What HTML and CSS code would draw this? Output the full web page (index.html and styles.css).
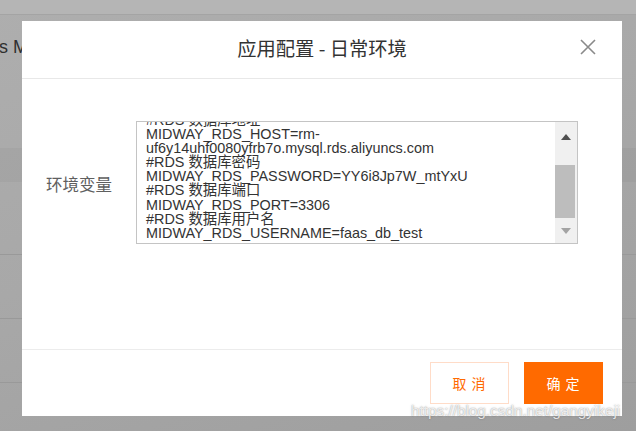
FILE: index.html
```html
<!DOCTYPE html>
<html lang="zh-CN">
<head>
<meta charset="utf-8">
<title>应用配置 - 日常环境</title>
<link rel="stylesheet" href="styles.css">
</head>
<body>
<div class="page">
  <div class="topbar"></div>
  <div class="head-row"><span class="bg-text">s M</span></div>
  <div class="band"></div>
  <div class="row r1"></div>
  <div class="row r2"></div>
  <div class="row r3"></div>
  <div class="row r4"></div>
</div>

<div class="modal">
  <div class="modal-header">
    <h2 class="modal-title">应用配置 - 日常环境</h2>
    <span class="close" aria-label="close">
      <svg width="16" height="16" viewBox="0 0 16 16"><path d="M1 1 L15 15 M15 1 L1 15" stroke="#8a8a8a" stroke-width="1.6" fill="none"/></svg>
    </span>
  </div>
  <div class="modal-body">
    <div class="form-row">
      <label class="form-label">环境变量</label>
      <div class="textarea">
        <div class="ta-content">
          <div class="ta-lines">
            <div>#RDS 数据库地址</div>
            <div>MIDWAY_RDS_HOST=rm-uf6y14uhf0080yfrb7o.mysql.rds.aliyuncs.com</div>
            <div>#RDS 数据库密码</div>
            <div>MIDWAY_RDS_PASSWORD=YY6i8Jp7W_mtYxU</div>
            <div>#RDS 数据库端口</div>
            <div>MIDWAY_RDS_PORT=3306</div>
            <div>#RDS 数据库用户名</div>
            <div>MIDWAY_RDS_USERNAME=faas_db_test</div>
          </div>
        </div>
        <div class="scrollbar">
          <div class="sb-btn sb-up"><span class="arrow-up"></span></div>
          <div class="sb-gap"></div>
          <div class="sb-thumb"></div>
          <div class="sb-fill"></div>
          <div class="sb-btn sb-down"><span class="arrow-down"></span></div>
        </div>
      </div>
    </div>
  </div>
  <div class="modal-footer">
    <button class="btn btn-cancel">取 消</button>
    <button class="btn btn-ok">确 定</button>
  </div>
</div>

<div class="watermark">https://blog.csdn.net/gangyikeji</div>
</body>
</html>
```

FILE: styles.css
```css
html, body {
  margin: 0;
  padding: 0;
}
body {
  width: 636px;
  height: 431px;
  overflow: hidden;
  position: relative;
  background: linear-gradient(160deg, #aeaeae 0%, #a8a8a8 45%, #9e9e9e 100%);
  font-family: "Liberation Sans", "Noto Sans CJK SC", sans-serif;
}
.page {
  display: flex;
  flex-direction: column;
}
.topbar {
  height: 14px;
  background: #b5b5b5;
  border-bottom: 1px solid #a4a4a4;
}
.head-row {
  height: 67px;
  display: flex;
  align-items: center;
}
.bg-text {
  font-size: 18px;
  color: #2f2f2f;
  margin-left: -1px;
  margin-top: -2px;
}
.band {
  height: 34px;
  margin-top: 66px;
  background: rgba(0, 0, 0, 0.03);
}
.row {
  border-bottom: 1px solid #999999;
}
.r1 { height: 72px; }
.r2 { height: 63px; }
.r3 { height: 63px; }
.r4 { height: 40px; border-bottom: none; }

.modal {
  position: absolute;
  left: 22px;
  top: 21px;
  width: 600px;
  height: 395px;
  background: #ffffff;
  display: flex;
  flex-direction: column;
}
.modal-header {
  height: 57px;
  border-bottom: 1px solid #e8e8e8;
  display: flex;
  align-items: center;
  justify-content: center;
  position: relative;
}
.modal-title {
  margin: 0;
  margin-top: -3px;
  font-size: 19.3px;
  font-weight: normal;
  color: #333333;
  font-family: "Noto Sans CJK SC", sans-serif;
}
.close {
  position: absolute;
  right: 26px;
  top: 18px;
  width: 16px;
  height: 16px;
  display: flex;
}
.modal-body {
  flex: 1;
  padding: 42px 44px 0 24px;
}
.form-row {
  display: flex;
  align-items: center;
}
.form-label {
  width: 90px;
  font-size: 16.5px;
  color: #5f5f5f;
  font-family: "Noto Sans CJK SC", sans-serif;
  margin-top: 2px;
}
.textarea {
  width: 442px;
  height: 123px;
  box-sizing: border-box;
  border: 1px solid #c4c4c4;
  display: flex;
  overflow: hidden;
}
.ta-content {
  flex: 1;
  overflow: hidden;
  padding-left: 9px;
}
.ta-lines {
  margin-top: -9px;
  font-size: 14.4px;
  line-height: 14.1px;
  color: #333333;
  font-family: "Liberation Sans", "Noto Sans CJK SC", sans-serif;
  overflow-wrap: break-word;
}
.scrollbar {
  width: 22px;
  background: #f0f0f0;
  display: flex;
  flex-direction: column;
}
.sb-btn {
  display: flex;
  align-items: center;
  justify-content: center;
}
.sb-up { height: 29px; }
.sb-gap { height: 14px; }
.sb-thumb {
  height: 53px;
  margin: 0 2px 0 0;
  background: #bdbdbd;
}
.sb-fill { flex: 1; }
.sb-down { height: 24px; }
.arrow-up {
  width: 0;
  height: 0;
  border-left: 5.5px solid transparent;
  border-right: 5.5px solid transparent;
  border-bottom: 6px solid #4f4f4f;
}
.arrow-down {
  width: 0;
  height: 0;
  border-left: 5.5px solid transparent;
  border-right: 5.5px solid transparent;
  border-top: 6px solid #a3a3a3;
}
.modal-footer {
  height: 67px;
  border-top: 1px solid #ececec;
  box-sizing: border-box;
  display: flex;
  justify-content: flex-end;
  align-items: flex-start;
  gap: 15px;
  padding: 12px 19px 0 0;
}
.btn {
  width: 79px;
  height: 42px;
  box-sizing: border-box;
  font-size: 14px;
  font-family: "Noto Sans CJK SC", sans-serif;
  letter-spacing: 1px;
  cursor: pointer;
  padding: 0;
}
.btn-cancel {
  background: #ffffff;
  border: 1px solid #ffdcc8;
  color: #ff6a00;
}
.btn-ok {
  background: #ff6a00;
  border: 1px solid #ff6a00;
  color: #ffffff;
}
.watermark {
  position: absolute;
  left: 411px;
  top: 402px;
  font-size: 15.3px;
  font-family: "Liberation Sans", sans-serif;
  color: rgba(255, 255, 255, 0.8);
  text-shadow: 0 0 1.5px rgba(80, 80, 80, 0.7);
  white-space: nowrap;
}
```
